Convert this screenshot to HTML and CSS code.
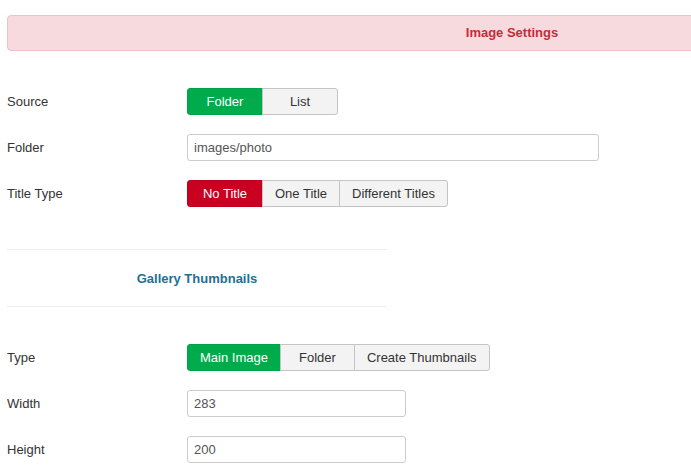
FILE: index.html
```html
<!DOCTYPE html>
<html lang="en">
<head>
    <meta charset="UTF-8">
    <title>Image Settings</title>
    <link rel="stylesheet" href="styles.css">
</head>
<body>
    <div class="page">
        <div class="section-title">Image Settings</div>

        <div class="control-group">
            <label class="control-label">Source</label>
            <div class="btn-group">
                <button class="btn btn-success">Folder</button>
                <button class="btn">List</button>
            </div>
        </div>

        <div class="control-group">
            <label class="control-label">Folder</label>
            <input class="text-input wide" type="text" value="images/photo">
        </div>

        <div class="control-group">
            <label class="control-label">Title Type</label>
            <div class="btn-group">
                <button class="btn btn-danger">No Title</button>
                <button class="btn">One Title</button>
                <button class="btn">Different Titles</button>
            </div>
        </div>

        <div class="spacer">
            <div class="spacer-title">Gallery Thumbnails</div>
        </div>

        <div class="control-group">
            <label class="control-label">Type</label>
            <div class="btn-group">
                <button class="btn btn-success">Main Image</button>
                <button class="btn narrow">Folder</button>
                <button class="btn">Create Thumbnails</button>
            </div>
        </div>

        <div class="control-group">
            <label class="control-label">Width</label>
            <input class="text-input" type="text" value="283">
        </div>

        <div class="control-group">
            <label class="control-label">Height</label>
            <input class="text-input" type="text" value="200">
        </div>
    </div>
</body>
</html>
```

FILE: styles.css
```css
/* Global */
html, body {
    overflow: hidden;
}

body {
    margin: 0;
    font-family: 'Liberation Sans', Arial, sans-serif;
    font-size: 13px;
    color: #333;
    background: #fff;
}

.page {
    width: 1010px;
    padding: 15px 0 0 7px;
}

/* Red section header */
.section-title {
    height: 34px;
    line-height: 34px;
    background-color: #f7dadd;
    border: 1px solid #f0c2c8;
    border-radius: 4px;
    text-align: center;
    font-weight: bold;
    color: #c22d3b;
}

/* Form rows */
.control-group {
    display: flex;
    align-items: center;
    height: 27px;
    margin-bottom: 19px;
}

.section-title + .control-group {
    margin-top: 37px;
}

.control-label {
    width: 180px;
    flex-shrink: 0;
    color: #333;
}

/* Button groups */
.btn-group {
    display: flex;
    height: 27px;
}

.btn {
    box-sizing: border-box;
    min-width: 76px;
    height: 27px;
    padding: 0 12px;
    margin: 0;
    margin-left: -1px;
    font-family: inherit;
    font-size: 13px;
    color: #333;
    background-color: #f3f3f3;
    border: 1px solid #c4c4c4;
    border-radius: 0;
}

.btn:first-child {
    margin-left: 0;
    border-radius: 3px 0 0 3px;
}

.btn:last-child {
    border-radius: 0 3px 3px 0;
}

.btn.narrow {
    min-width: 75px;
}

.btn-success {
    background-color: #00ab4b;
    border-color: #00a246;
    color: #fff;
}

.btn-danger {
    background-color: #c9001f;
    border-color: #bf001d;
    color: #fff;
}

/* Inputs */
.text-input {
    box-sizing: border-box;
    width: 219px;
    height: 27px;
    padding: 0 6px;
    font-family: inherit;
    font-size: 13px;
    color: #555;
    border: 1px solid #ccc;
    border-radius: 3px;
}

.text-input.wide {
    width: 412px;
}

/* Sub-heading between hr lines */
.spacer {
    width: 380px;
    margin: 42px 0 37px;
    border-top: 1px solid #eee;
    border-bottom: 1px solid #eee;
    height: 56px;
    display: flex;
    align-items: center;
    justify-content: center;
}

.spacer-title {
    font-weight: bold;
    color: #236f96;
}
```
